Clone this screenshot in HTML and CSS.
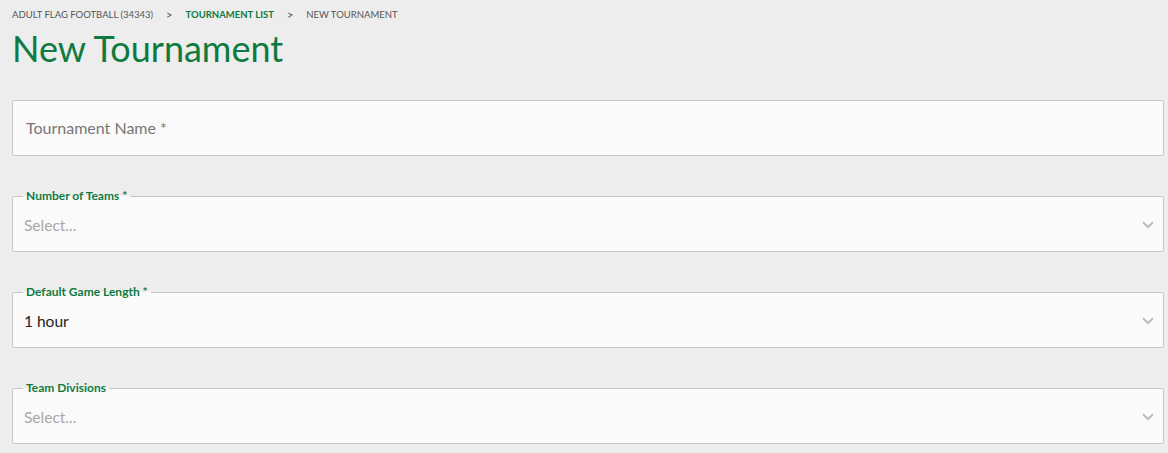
FILE: index.html
```html
<!DOCTYPE html>
<html lang="en">
<head>
<meta charset="utf-8">
<title>New Tournament</title>
<link rel="stylesheet" href="styles.css">
</head>
<body>
<div class="page">
  <nav class="crumbs">
    <span class="crumb">Adult Flag Football (34343)</span>
    <span class="sep">&gt;</span>
    <a class="crumb link" href="#">Tournament List</a>
    <span class="sep">&gt;</span>
    <span class="crumb">New Tournament</span>
  </nav>
  <h1 class="title">New Tournament</h1>
  <form class="fields">
    <div class="text-field">
      <input type="text" class="text-input" placeholder="Tournament Name *">
    </div>
    <fieldset class="select-field">
      <legend class="legend">Number of Teams *</legend>
      <div class="select-row">
        <span class="value placeholder">Select...</span>
        <svg class="chevron" width="12" height="8" viewBox="0 0 12 8"><path d="M1 1.2 L6 6 L11 1.2" fill="none" stroke="#bdbdbd" stroke-width="2"/></svg>
      </div>
    </fieldset>
    <fieldset class="select-field">
      <legend class="legend">Default Game Length *</legend>
      <div class="select-row">
        <span class="value">1 hour</span>
        <svg class="chevron" width="12" height="8" viewBox="0 0 12 8"><path d="M1 1.2 L6 6 L11 1.2" fill="none" stroke="#bdbdbd" stroke-width="2"/></svg>
      </div>
    </fieldset>
    <fieldset class="select-field">
      <legend class="legend">Team Divisions</legend>
      <div class="select-row">
        <span class="value placeholder">Select...</span>
        <svg class="chevron" width="12" height="8" viewBox="0 0 12 8"><path d="M1 1.2 L6 6 L11 1.2" fill="none" stroke="#bdbdbd" stroke-width="2"/></svg>
      </div>
    </fieldset>
  </form>
</div>
</body>
</html>
```
FILE: styles.css
```css
html, body {
  margin: 0;
  padding: 0;
  background: #ededed;
}
body {
  font-family: Lato, "Open Sans", Arial, sans-serif;
  color: #222;
}
.page {
  padding: 9px 4px 0 12px;
}
.crumbs {
  display: flex;
  align-items: center;
  font-size: 9.5px;
  line-height: 12px;
  text-transform: uppercase;
  color: #555;
}
.crumb {
  color: #555;
  text-decoration: none;
}
.crumb.link {
  color: #0e7a40;
  font-weight: bold;
}
.sep {
  color: #555;
  margin: 0 13px 0 13px;
  font-size: 11px;
}
.title {
  margin: 5px 0 30px;
  font-size: 36px;
  line-height: 44px;
  font-weight: normal;
  color: #0e7a40;
}
.fields {
  display: flex;
  flex-direction: column;
  gap: 33px;
}
.text-field {
  height: 56px;
  box-sizing: border-box;
  border: 1px solid #c6c6c6;
  border-radius: 2px;
  background: #fafafa;
  display: flex;
}
.text-input {
  flex: 1;
  border: none;
  background: transparent;
  padding: 0 13px 2px;
  font-family: inherit;
  font-size: 16px;
  color: #222;
  outline: none;
}
.text-input::placeholder {
  color: #777;
}
.select-field {
  margin: 0;
  padding: 0 10px 0 10px;
  border: 1px solid #c6c6c6;
  border-radius: 2px;
  background: #fafafa;
  min-width: 0;
}
.legend {
  padding: 0 3px;
  font-size: 12px;
  line-height: 14px;
  font-weight: bold;
  color: #0e7a40;
}
.select-row {
  height: 48px;
  display: flex;
  align-items: center;
  justify-content: space-between;
  padding-bottom: 4px;
  box-sizing: border-box;
}
.value {
  font-size: 15.5px;
  color: #222;
  padding-left: 1px;
}
.value.placeholder {
  color: #a8a8a8;
}
.chevron {
  margin-right: -1px;
}
```
